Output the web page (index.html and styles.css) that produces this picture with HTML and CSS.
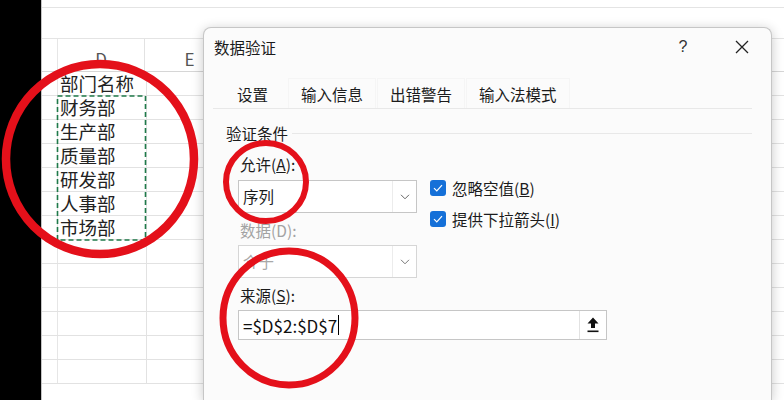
FILE: index.html
```html
<!DOCTYPE html>
<html lang="zh-CN">
<head>
  <meta charset="UTF-8">
  <title>数据验证</title>
  <link rel="stylesheet" href="styles.css">
</head>
<body>

<div class="app">
  <div class="edge"></div>
  <div class="sheet">
    <div class="bar-top"></div>
    <div class="bar-formula"></div>
    <div class="row head">
      <div class="rh"></div><div class="cell d">D</div><div class="cell e">E</div><div class="cell rest"></div>
    </div>
    <div class="row"><div class="rh"></div><div class="cell d">部门名称</div><div class="cell e"></div><div class="cell rest"></div></div>
    <div class="row"><div class="rh"></div><div class="cell d">财务部</div><div class="cell e"></div><div class="cell rest"></div></div>
    <div class="row"><div class="rh"></div><div class="cell d">生产部</div><div class="cell e"></div><div class="cell rest"></div></div>
    <div class="row"><div class="rh"></div><div class="cell d">质量部</div><div class="cell e"></div><div class="cell rest"></div></div>
    <div class="row"><div class="rh"></div><div class="cell d">研发部</div><div class="cell e"></div><div class="cell rest"></div></div>
    <div class="row"><div class="rh"></div><div class="cell d">人事部</div><div class="cell e"></div><div class="cell rest"></div></div>
    <div class="row"><div class="rh"></div><div class="cell d">市场部</div><div class="cell e"></div><div class="cell rest"></div></div>
    <div class="row"><div class="rh"></div><div class="cell d"></div><div class="cell e"></div><div class="cell rest"></div></div>
    <div class="row"><div class="rh"></div><div class="cell d"></div><div class="cell e"></div><div class="cell rest"></div></div>
    <div class="row"><div class="rh"></div><div class="cell d"></div><div class="cell e"></div><div class="cell rest"></div></div>
    <div class="row"><div class="rh"></div><div class="cell d"></div><div class="cell e"></div><div class="cell rest"></div></div>
    <div class="row"><div class="rh"></div><div class="cell d"></div><div class="cell e"></div><div class="cell rest"></div></div>
    <div class="row"><div class="rh"></div><div class="cell d"></div><div class="cell e"></div><div class="cell rest"></div></div>
  </div>
</div>

<!-- 数据验证 对话框 -->
<div class="dialog">
  <div class="titlebar">
    <span class="title">数据验证</span>
    <span class="help">?</span>
    <span class="close">
      <svg width="14" height="14" viewBox="0 0 14 14"><path d="M1 1 L13 13 M13 1 L1 13" stroke="#222" stroke-width="1.3" fill="none"/></svg>
    </span>
  </div>

  <div class="tabs">
    <div class="tab active">设置</div>
    <div class="tab">输入信息</div>
    <div class="tab">出错警告</div>
    <div class="tab">输入法模式</div>
  </div>

  <div class="panel">
    <div class="group-title">验证条件</div>

    <div class="form">
      <div class="label">允许(<u>A</u>):</div>
      <div class="select">
        <span class="sel-text">序列</span>
        <span class="sel-btn"><svg width="10" height="6" viewBox="0 0 10 6"><path d="M1 0.8 L5 4.8 L9 0.8" stroke="#666" stroke-width="1" fill="none"/></svg></span>
      </div>

      <div class="checks">
        <div class="check">
          <span class="box"><svg width="10" height="8" viewBox="0 0 10 8"><path d="M1 4.2 L3.8 7 L9 1.2" stroke="#fff" stroke-width="1.2" fill="none"/></svg></span>
          <span>忽略空值(<u>B</u>)</span>
        </div>
        <div class="check">
          <span class="box"><svg width="10" height="8" viewBox="0 0 10 8"><path d="M1 4.2 L3.8 7 L9 1.2" stroke="#fff" stroke-width="1.2" fill="none"/></svg></span>
          <span>提供下拉箭头(<u>I</u>)</span>
        </div>
      </div>

      <div class="label off">数据(D):</div>
      <div class="select off">
        <span class="sel-text">介于</span>
        <span class="sel-btn"><svg width="10" height="6" viewBox="0 0 10 6"><path d="M1 0.8 L5 4.8 L9 0.8" stroke="#777" stroke-width="1" fill="none"/></svg></span>
      </div>

      <div class="label">来源(<u>S</u>):</div>
      <div class="source">
        <span class="src-text">=$D$2:$D$7<span class="caret"></span></span>
        <span class="src-btn">
          <svg width="12" height="16" viewBox="0 0 12 16"><path d="M6 0.5 L11.5 6.5 L8 6.5 L8 11 L4 11 L4 6.5 L0.5 6.5 Z" fill="#111"/><rect x="0.5" y="13.5" width="11" height="1.6" fill="#111"/></svg>
        </span>
      </div>
    </div>
  </div>
</div>

<!-- 复制选区 + 红色圈注 -->
<svg class="marks" width="784" height="400" viewBox="0 0 784 400">
  <rect x="57.5" y="96" width="88" height="144" fill="none" stroke="#1f7a4a" stroke-width="1.6" stroke-dasharray="5 3"/>
  <ellipse cx="100" cy="159" rx="94" ry="95" fill="none" stroke="#e4101a" stroke-width="8.5"/>
  <ellipse cx="266" cy="182" rx="40" ry="39" fill="none" stroke="#e4101a" stroke-width="6"/>
  <ellipse cx="289" cy="318" rx="66" ry="67" fill="none" stroke="#e4101a" stroke-width="7"/>
</svg>

</body>
</html>
```

FILE: styles.css
```css
body {
    margin: 0;
    width: 784px;
    height: 400px;
    overflow: hidden;
    position: relative;
    background-color: #fff;
    font-family: "Noto Sans CJK SC", sans-serif;
}

.app {
    display: flex;
    height: 400px;
    overflow: hidden;
}

.edge {
    width: 41px;
    background-color: #000;
}

.sheet {
    flex: 1;
    overflow: hidden;
    border-left: 1px solid #c4c4c4;
    background-color: #fff;
}

.bar-top {
    height: 7px;
    border-bottom: 1px solid #e4e4e4;
}

.bar-formula {
    height: 30px;
    border-bottom: 1px solid #e4e4e4;
}

.row {
    display: flex;
    height: 23px;
    border-bottom: 1px solid #e2e2e2;
}

.row.head {
    height: 32px;
    border-bottom: 1px solid #d6d6d6;
}

.rh {
    width: 15px;
    border-right: 1px solid #e6e6e6;
}

.cell {
    font-size: 18.5px;
    line-height: 23px;
    color: #222;
    border-right: 1px solid #e2e2e2;
    white-space: nowrap;
}

.cell.d {
    width: 86px;
    padding-left: 2px;
}

.cell.e {
    width: 89px;
}

.cell.rest {
    flex: 1;
    border-right: none;
    background: linear-gradient(to right, #fff 0, #fff 725px, #e4e8ee 730px, #f2f4f7 743px);
}

.head .cell {
    font-size: 17px;
    line-height: 20px;
    padding: 10px 0 0 0;
    text-align: center;
    color: #555;
}

.head .cell.rest {
    background: #fff;
}

/* 对话框 */
.dialog {
    position: absolute;
    left: 203px;
    top: 27px;
    width: 569px;
    height: 373px;
    box-sizing: border-box;
    background-color: #fbfbfb;
    border: 1px solid #c6c6c6;
    border-bottom: none;
    border-radius: 8px 8px 0 0;
    box-shadow: 0 2px 12px rgba(0,0,0,0.22);
    color: #1b1b1b;
    font-size: 15.5px;
}

.titlebar {
    display: flex;
    align-items: center;
    height: 37px;
    padding: 0 6px 0 10px;
}

.title {
    flex: 1;
}

.help {
    width: 40px;
    text-align: center;
    color: #333;
    font-size: 16px;
    font-family: "Liberation Sans", sans-serif;
}

.close {
    width: 46px;
    margin-left: 16px;
    display: flex;
    justify-content: center;
}

.tabs {
    display: flex;
    height: 30px;
    margin: 13px 19px 0 9px;
    border-bottom: 1px solid #e8e8e8;
}

.tab {
    padding: 0 12px;
    line-height: 30px;
    margin-left: 1px;
    border: 1px solid #f5f5f5;
    border-bottom: none;
    box-sizing: border-box;
}

.tab.active {
    margin-left: 5px;
    padding: 0 18px;
    border-color: transparent;
}

.panel {
    padding: 0 19px 0 22px;
}

.group-title {
    display: flex;
    align-items: center;
    height: 20px;
    line-height: 20px;
    margin-top: 14px;
}

.group-title::after {
    content: '';
    flex: 1;
    height: 1px;
    margin-left: 4px;
    background-color: #e8e8e8;
}

.form {
    display: grid;
    grid-template-columns: 179px auto;
    column-gap: 13px;
    padding-left: 12px;
    justify-items: start;
}

.form > * {
    grid-column: 1;
}

.label {
    height: 20px;
    line-height: 20px;
    padding-left: 2px;
    margin-top: 7px;
}

.label:first-child {
    margin-top: 11px;
}

.label.off {
    color: #a3a3a3;
}

.select {
    display: flex;
    width: 179px;
    height: 33px;
    box-sizing: border-box;
    margin-top: 6px;
    border: 1px solid #c6c6c6;
    background-color: #fff;
}

.select.off {
    margin-top: 5px;
    border-color: #d6d6d6;
    color: #a8a8a8;
}

.sel-text {
    flex: 1;
    padding-left: 4px;
    line-height: 31px;
}

.sel-btn {
    width: 23px;
    display: flex;
    align-items: center;
    justify-content: center;
    border-left: 1px solid #ececec;
}

.checks {
    grid-column: 2;
    grid-row: 2 / 4;
    display: flex;
    flex-direction: column;
    gap: 11px;
    margin-top: 4px;
}

.check {
    display: flex;
    align-items: center;
    gap: 6px;
    height: 20px;
    white-space: nowrap;
}

.box {
    width: 16px;
    height: 16px;
    border-radius: 3px;
    background-color: #1570d8;
    display: flex;
    align-items: center;
    justify-content: center;
}

.source {
    grid-column: 1 / 3;
    display: flex;
    width: 369px;
    height: 30px;
    box-sizing: border-box;
    margin-top: 5px;
    border: 1px solid #c6c6c6;
    background-color: #fff;
}

.src-text {
    flex: 1;
    display: flex;
    align-items: center;
    padding-left: 4px;
    font-size: 17px;
    color: #111;
}

.caret {
    width: 1px;
    height: 20px;
    margin-left: 1px;
    background-color: #000;
}

.src-btn {
    width: 26px;
    display: flex;
    align-items: center;
    justify-content: center;
    border-left: 1px solid #e2e2e2;
}

.marks {
    position: absolute;
    left: 0;
    top: 0;
    pointer-events: none;
}
```
